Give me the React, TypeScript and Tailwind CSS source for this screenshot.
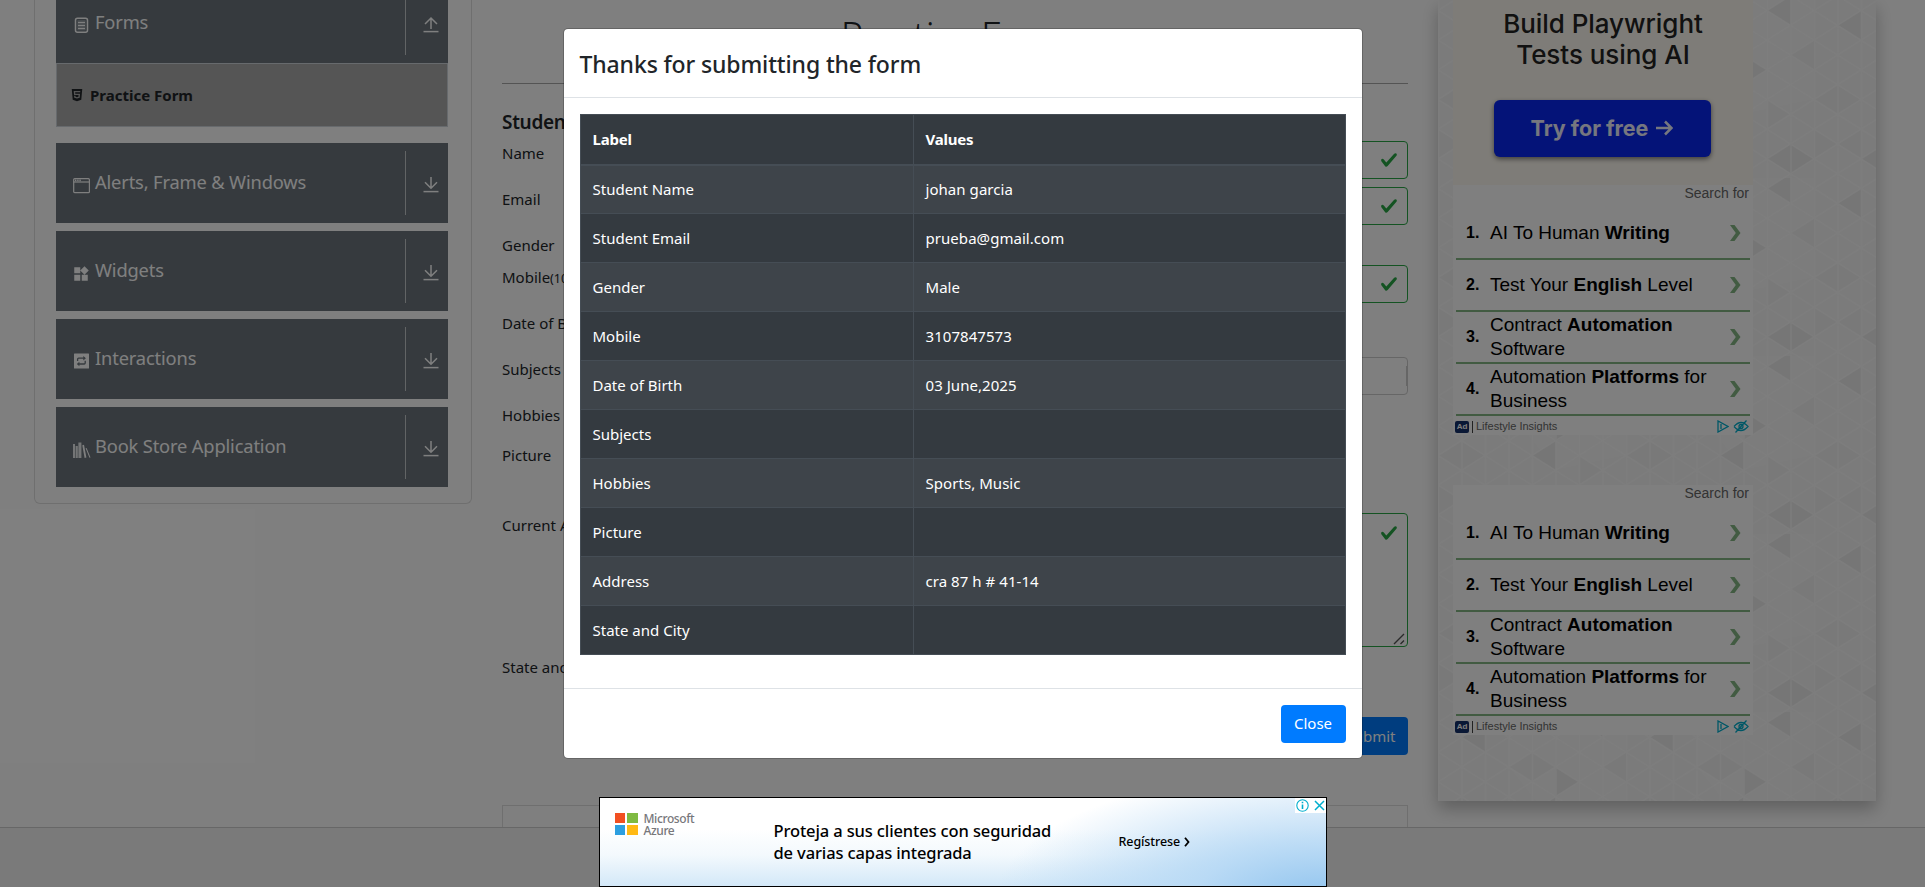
import React from "react";
import { MdWidgets } from "react-icons/md";
import { FaHtml5 } from "react-icons/fa";

function FormsIcon() {
  return (
    <svg width="18" height="18" viewBox="0 0 18 18" fill="none" stroke="currentColor">
      <rect x="2.500" y="1.300" width="12" height="14" rx="2" strokeWidth="1.5" />
      <rect x="4.500" y="3.300" width="8" height="10" fill="currentColor" stroke="none" opacity="0.35" />
      <path d="M5 5.500h7M5 8.500h7M5 11.500h7" strokeWidth="1" />
    </svg>
  );
}

function WindowIcon() {
  return (
    <svg width="18" height="18" viewBox="0 0 18 18" fill="none" stroke="currentColor">
      <rect x="0.7" y="1.700" width="15.700" height="14" rx="1" strokeWidth="1.2" />
      <path d="M.7 5h15.700" strokeWidth="1.2" />
      <path d="M2 3.400h6" strokeWidth="1.6" strokeDasharray="1.4 0.8" />
    </svg>
  );
}

function SwapIcon() {
  return (
    <svg width="18" height="18" viewBox="0 0 18 18">
      <rect x="1" y="0.500" width="15" height="15" rx="0.5" fill="currentColor" />
      <path d="M4.600 8V6.2q0-1 1-1h6M12.200 7.800V10q0 1-1 1H6" fill="none" stroke="#6c757d" strokeWidth="1.3" />
      <path d="M10.300 2.900 12.900 5.2 10.300 7.400zM6.400 8.7 3.800 11 6.400 13.2z" fill="#6c757d" />
    </svg>
  );
}

function BooksIcon() {
  return (
    <svg width="18" height="18" viewBox="0 0 18 18" fill="currentColor">
      <path d="M0 3h2v14H0zM2.600 5h2.2v12H2.600zM5.400 1.5h3V17h-3z" opacity="0.85" />
      <path d="M9.300 4.2 11 3.8 13.400 16.6 11.600 17zM12.600 7.2 13.600 6.9 17.500 16.4 16.500 16.8z" />
    </svg>
  );
}

function ArrowIcon({ up = false }: { up?: boolean }) {
  return (
    <svg width="16" height="18" viewBox="0 0 16 18" fill="none" stroke="currentColor" strokeWidth="1.5">
      {up ? <path d="M8 13V2M2 8l6-6 6 6" /> : <path d="M8 1v11M2 6.2l6 6 6-6" />}
      <path d="M.5 15.6h15" />
    </svg>
  );
}

function Group({ icon, label, up }: { icon: React.ReactNode; label: string; up?: boolean }) {
  return (
    <div className="flex h-20 items-center bg-[#6c757d] pl-[17px] pr-[9px] text-white">
      <span className="mt-[5px] w-[18px]">{icon}</span>
      <span className="-mt-0.5 ml-1 flex-1 whitespace-nowrap text-[18.300px] leading-7 tracking-[-0.150px]">{label}</span>
      <span className="flex h-16 items-center border-l border-white/60 pl-[17px] pt-[3px]">
        <ArrowIcon up={up} />
      </span>
    </div>
  );
}

function Sidebar() {
  return (
    <aside className="ml-[34px] h-[504px] w-[438px] shrink-0 rounded-b-md border border-t-0 border-[#dfdfdf] pl-[21px] pr-[23px]">
      <div className="-mt-[17px]">
        <Group icon={<FormsIcon />} label="Forms" up />
        <div className="mb-4 flex h-16 items-center gap-[6px] border border-[#ced4da] bg-[#aaaaaa] pl-[13px] text-[15px] font-bold text-[#212529]">
          <FaHtml5 size={14} />
          <span>Practice Form</span>
        </div>
        <div className="flex flex-col gap-2">
          <Group icon={<WindowIcon />} label="Alerts, Frame & Windows" />
          <Group icon={<MdWidgets size={18} className="-ml-px" />} label="Widgets" />
          <Group icon={<SwapIcon />} label="Interactions" />
          <Group icon={<BooksIcon />} label="Book Store Application" />
        </div>
      </div>
    </aside>
  );
}

function Check() {
  return (
    <svg width="18" height="18" viewBox="0 0 8 8" fill="#28a745">
      <path d="M2.3 6.73.6 4.53c-.4-1.04.46-1.4 1.1-.8l1.1 1.4 3.4-3.8c.6-.63 1.6-.27 1.2.7l-4 4.6c-.43.5-.8.4-1.1.1z" />
    </svg>
  );
}

function Row({ label, hint, className, children }: { label: string; hint?: string; className: string; children?: React.ReactNode }) {
  return (
    <div className={"flex items-start " + className}>
      <div className="w-[226px] shrink-0 whitespace-nowrap text-[15px] leading-6">
        {label}
        {hint && <small className="text-[12.500px]">{hint}</small>}
      </div>
      {children}
    </div>
  );
}

const VALID = "flex h-[38px] flex-1 items-center justify-end rounded border border-[#28a745] pr-[9px]";

function PracticeForm() {
  return (
    <main className="ml-[30px] flex w-[906px] shrink-0 flex-col text-[#212529]">
      <h1 className="h-[83px] pt-[11px] text-center text-[38px] font-light leading-[48px] tracking-[-0.6px]">Practice Form</h1>
      <div className="border-t border-[#a8a8a8]" />
      <h5 className="mt-[26px] h-[31px] text-[19px] font-semibold leading-6 tracking-[-0.3px]">Student Registration Form</h5>
      <Row label="Name" className="h-[46px]"><div className={VALID}><Check /></div></Row>
      <Row label="Email" className="h-[46px]"><div className={VALID}><Check /></div></Row>
      <Row label="Gender" className="h-8" />
      <Row label="Mobile" hint="(10 Digits)" className="h-[46px]"><div className={VALID}><Check /></div></Row>
      <Row label="Date of Birth" className="h-[46px]" />
      <Row label="Subjects" className="h-[46px]">
        <div className="flex h-[38px] flex-1 items-center justify-end rounded border border-[#cccccc]">
          <div className="h-5 border-l border-[#cccccc]" />
        </div>
      </Row>
      <Row label="Hobbies" className="h-10" />
      <Row label="Picture" className="h-[70px]" />
      <Row label="Current Address" className="h-[142px]">
        <div className="flex h-[134px] flex-1 flex-col items-end justify-between rounded border border-[#28a745] pb-px pr-0.5 pt-[10px]">
          <span className="mr-[7px]"><Check /></span>
          <svg width="12" height="12" viewBox="0 0 12 12" stroke="#555" strokeWidth="1.4"><path d="M1 11 11 1M7.5 11 11 7.5" /></svg>
        </div>
      </Row>
      <Row label="State and City" className="h-[62px]" />
      <button className="h-[38px] w-[75px] self-end rounded bg-[#007bff] text-[15px] text-white">Submit</button>
      <div className="mt-[50px] h-[22px] border border-b-0 border-[#dfdfdf]" />
    </main>
  );
}

const TILE_W = 188;
const TILE_H = 178;
const SIDE = TILE_H / 6;
const LINES = Array.from({ length: 16 }, (_, i) => {
  const y = 10.5 + (i - 5) * SIDE;
  return `M0 ${y}L${TILE_W} ${y + 4 * SIDE}M0 ${y}L${TILE_W} ${y - 4 * SIDE}`;
}).join("");
const COLUMNS = Array.from({ length: 8 }, (_, i) => `M${i * 23.5 + 0.5} 0V${TILE_H}`).join("");

function Triangles() {
  return (
    <svg className="absolute inset-0" width="438" height="801">
      <defs>
        <pattern id="tri" width={TILE_W} height={TILE_H} patternUnits="userSpaceOnUse">
          <rect width={TILE_W} height={TILE_H} fill="#f6f6f6" />
          <path d="M70.500 0H188V99.500L117.500 114.300 70.500 55z" fill="#f8f8f8" />
          <path
            d="M0 99.500 23.500 84.700 47 99.500 23.500 114.300zM0 129.200 23.500 144 0 158.800zM23.500 144 47 129.200V158.800zM70.500 55 94 40.200 117.500 55 94 69.800zM141 99.500 164.500 114.300 141 129.200zM164.500 55 188 40.200V69.800z"
            fill="#f2f2f2"
          />
          <path
            d="M141 10.500 164.500-4.300V25.300zM24 25.300 47 10.500V40.200zM141 69.800 117.500 55V84.700zM141 158.800 164.500 144 188 158.800 164.500 173.700zM47 158.800 70.500 144V173.700zM94 99.500 117.500 84.700V114.300z"
            fill="#ececec"
          />
          <path d={LINES + COLUMNS} stroke="#fdfdfd" strokeWidth="1.500" strokeOpacity="0.8" fill="none" />
        </pattern>
      </defs>
      <rect width="438" height="801" fill="url(#tri)" />
    </svg>
  );
}

const TOPICS: React.ReactNode[] = [
  <>AI To Human <b>Writing</b></>,
  <>Test Your <b>English</b> Level</>,
  <>Contract <b>Automation</b><br />Software</>,
  <>Automation <b>Platforms</b> for<br />Business</>,
];

function SearchAd() {
  return (
    <div className="h-[250px] w-[300px] bg-white px-[3px] font-['Liberation_Sans',sans-serif]">
      <div className="h-[23px] pr-px text-right text-[14px] leading-4 text-[#666]">Search for</div>
      {TOPICS.map((t, i) => (
        <div key={i} className="flex h-[52px] items-center border-b-2 border-[#84b784] pl-[10px] pr-[9px] text-black">
          <span className="w-6 text-[16px] font-bold">{i + 1}.</span>
          <span className="flex-1 whitespace-nowrap text-[19px] leading-6">{t}</span>
          <svg width="11" height="16" viewBox="0 0 11 16" fill="#84b784"><path d="M0 0H4.500L10.500 8 4.500 16H0L5.800 8z" /></svg>
        </div>
      ))}
      <div className="flex h-[19px] items-center pt-0.5 text-[11px] text-[#666]">
        <span className="-ml-px flex h-3 w-[14px] items-center justify-center rounded-[2px] bg-[#14306a] text-[8px] font-bold text-white">Ad</span>
        <span className="ml-[3px] h-3 border-l border-[#444]" />
        <span className="ml-[3px] flex-1">Lifestyle Insights</span>
        <svg width="12" height="13" viewBox="0 0 12 13" fill="none" stroke="#00aecd" strokeWidth="1.3"><path d="M1 1v11l10-5.500zM4 4v5" /></svg>
        <svg className="ml-1 mr-px" width="16" height="13" viewBox="0 0 16 13" fill="none" stroke="#00aecd" strokeWidth="1.3">
          <path d="M1 6.500Q8-1.500 15 6.500 8 14.500 1 6.500M13.500.5 2.500 12.500" /><circle cx="8" cy="6.500" r="2" />
        </svg>
      </div>
    </div>
  );
}

function AdColumn() {
  return (
    <aside className="relative ml-[30px] h-[801px] w-[438px] shrink-0 shadow-[0_8px_16px_rgba(0,0,0,0.25)]">
      <Triangles />
      <div className="relative flex flex-col pl-[15px]">
        <div className="flex h-[185px] w-[300px] flex-col items-center bg-[#fdf9f0] pt-2 font-[Inter,sans-serif] text-[#222]">
          <div className="text-center text-[26px] font-medium leading-[31px] tracking-[-0.05px]">Build Playwright<br />Tests using AI</div>
          <div className="mr-0.5 mt-[30px] flex h-[57px] w-[217px] items-center justify-center gap-2 rounded-md bg-[#0826f0] pb-px text-[21.500px] font-bold text-[#eceeff] shadow-[0_2px_5px_rgba(0,0,0,0.5)]">
            Try for free
            <svg width="17" height="16" viewBox="0 0 17 16" fill="none" stroke="currentColor" strokeWidth="2.500"><path d="M0 8h15M9 1.500 15.500 8 9 14.500" /></svg>
          </div>
        </div>
        <SearchAd />
        <div className="h-[50px]" />
        <SearchAd />
      </div>
    </aside>
  );
}

const ROWS: [string, string][] = [
  ["Student Name", "johan garcia"],
  ["Student Email", "prueba@gmail.com"],
  ["Gender", "Male"],
  ["Mobile", "3107847573"],
  ["Date of Birth", "03 June,2025"],
  ["Subjects", ""],
  ["Hobbies", "Sports, Music"],
  ["Picture", ""],
  ["Address", "cra 87 h # 41-14"],
  ["State and City", ""],
];

function Modal() {
  return (
    <div className="mx-auto mt-7 h-[731px] w-[800px] rounded-[5px] border border-black/20 bg-white bg-clip-padding text-[#212529]">
      <div className="flex h-[69px] items-center border-b border-[#dee2e6] px-4 pt-0.5 text-[23px] font-medium tracking-[-0.13px]">Thanks for submitting the form</div>
      <div className="h-[590px] p-4">
        <table className="w-full table-fixed border-collapse border border-[#454d55] bg-[#343a40] text-left text-[15px] leading-6 text-white">
          <thead>
            <tr className="h-[50px]">
              <th className="w-[333px] border border-b-2 border-[#454d55] px-3 font-bold tracking-[-0.2px]">Label</th>
              <th className="border border-b-2 border-[#454d55] px-3 font-bold tracking-[-0.2px]">Values</th>
            </tr>
          </thead>
          <tbody>
            {ROWS.map(([a, b]) => (
              <tr key={a} className="h-[49px] odd:bg-white/5">
                <td className="border border-[#454d55] px-3">{a}</td>
                <td className="border border-[#454d55] px-3 tracking-[0.05px]">{b}</td>
              </tr>
            ))}
          </tbody>
        </table>
      </div>
      <div className="flex h-[70px] items-center justify-end border-t border-[#dee2e6] px-4">
        <button className="h-[38px] w-[65px] rounded bg-[#007bff] text-[15px] text-white">Close</button>
      </div>
    </div>
  );
}

function Banner() {
  return (
    <div className="flex h-[90px] w-[728px] border border-black bg-[radial-gradient(ellipse_330px_130px_at_100%_115%,#8fc3ee_0%,#b9daf5_40%,transparent_100%),linear-gradient(180deg,#ffffff_35%,#f3f9fd_65%,#d3e8f8_100%)] text-black">
      <div className="flex w-[174px] gap-[6px] pl-[15px] pt-[15px]">
        <div className="grid h-[22px] w-[23px] grid-cols-2 gap-[2px]">
          <i className="bg-[#f25022]" /><i className="bg-[#7fba42]" /><i className="bg-[#2d9fe0]" /><i className="bg-[#ffb914]" />
        </div>
        <div className="text-[12px] font-medium leading-[12px] tracking-[-0.4px] text-[#77777b]">Microsoft<br />Azure</div>
      </div>
      <div className="w-[345px] whitespace-nowrap pt-[22px] text-[16.500px] font-medium leading-[22px] tracking-[-0.13px]">Proteja a sus clientes con seguridad<br />de varias capas integrada</div>
      <div className="flex w-[145px] items-center gap-1 text-[12.500px] font-medium">
        <span className="tracking-[-0.1px]">Regístrese</span>
        <svg width="6" height="10" viewBox="0 0 6 10" fill="none" stroke="#000" strokeWidth="1.800"><path d="M1 .7 4.500 5 1 9.300" /></svg>
      </div>
      <div className="ml-auto flex h-[15px] w-[31px] items-center gap-[5px] bg-white pl-px">
        <svg width="13" height="13" viewBox="0 0 13 13" fill="none" stroke="#00aecd"><circle cx="6.500" cy="6.500" r="5.700" strokeWidth="1.100" /><path d="M6.500 5.500V10M6.500 2.800v1.500" strokeWidth="1.600" /></svg>
        <svg width="11" height="11" viewBox="0 0 11 11" stroke="#00aecd" strokeWidth="1.500"><path d="M1 1 10 10M10 1 1 10" /></svg>
      </div>
    </div>
  );
}

export default function App() {
  return (
    <div className="relative h-[887px] w-full overflow-hidden bg-white font-['Noto_Sans',sans-serif]">
      <div className="flex h-[827px] items-start">
        <Sidebar />
        <PracticeForm />
        <AdColumn />
      </div>
      <footer className="h-[60px] border-t border-[#cfcfcf] bg-[#f5f5f5]" />
      <div className="absolute inset-0 bg-black/50">
        <Modal />
      </div>
      <div className="absolute bottom-0 left-1/2 -translate-x-1/2">
        <Banner />
      </div>
    </div>
  );
}
